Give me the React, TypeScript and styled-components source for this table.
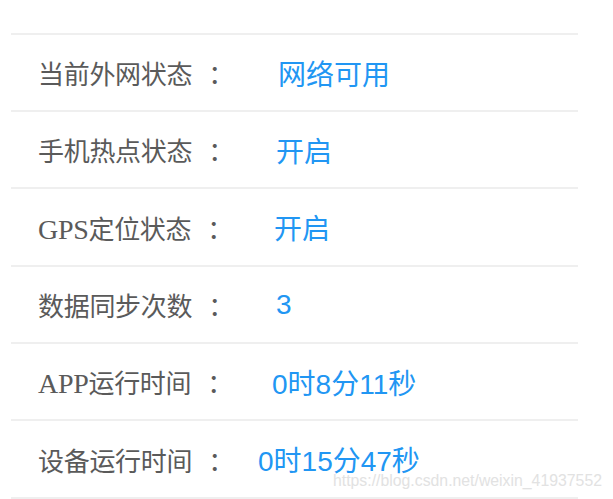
import styled, { createGlobalStyle } from 'styled-components';

const GlobalStyle = createGlobalStyle`
  html, body {
    margin: 0;
    padding: 0;
    background: #ffffff;
  }
`;

// value x positions in the screenshot differ a little per row
const rows = [
  { latin: '', label: '当前外网状态', value: '网络可用', shift: 20 },
  { latin: '', label: '手机热点状态', value: '开启', shift: 18 },
  { latin: 'GPS', label: '定位状态', value: '开启', shift: 16 },
  { latin: '', label: '数据同步次数', value: '3', shift: 18 },
  { latin: 'APP', label: '运行时间', value: '0时8分11秒', shift: 14 },
  { latin: '', label: '设备运行时间', value: '0时15分47秒', shift: 0 },
];

export default function App() {
  return (
    <>
      <GlobalStyle />
      <Page>
        <StatusList>
          {rows.map((row) => (
            <StatusRow key={row.label}>
              <Label>
                {row.latin && <Latin>{row.latin}</Latin>}
                {row.label}
                <Colon>：</Colon>
              </Label>
              <Value $shift={row.shift}>{row.value}</Value>
            </StatusRow>
          ))}
        </StatusList>
        <Watermark>https://blog.csdn.net/weixin_41937552</Watermark>
      </Page>
    </>
  );
}

const Page = styled.div`
  position: relative;
  width: 613px;
  height: 499px;
  overflow: hidden;
  padding-top: 33px;
  box-sizing: border-box;
`;

const StatusList = styled.div`
  margin-left: 11px;
  width: 567px;
  display: flex;
  flex-direction: column;
  border-bottom: 2px solid #efefef;
`;

const StatusRow = styled.div`
  display: grid;
  grid-template-columns: 220px 1fr;
  align-items: center;
  height: 75px;
  border-top: 2px solid #efefef;
  padding-left: 27px;
  &:nth-child(3n) {
    height: 76px;
  }
`;

const Label = styled.span`
  font-family: "Liberation Serif", "Noto Sans CJK SC", serif;
  font-size: 26px;
  letter-spacing: -0.3px;
  color: #5a5a5a;
  white-space: nowrap;
`;

const Latin = styled.span`
  font-size: 28px;
`;

const Colon = styled.span`
  margin-left: 16px;
`;

const Value = styled.span<{ $shift: number }>`
  margin-left: ${(p) => p.$shift}px;
  font-family: "Liberation Sans", "Noto Sans CJK SC", sans-serif;
  font-size: 28px;
  color: #2196f3;
  white-space: nowrap;
`;

const Watermark = styled.div`
  position: absolute;
  left: 333px;
  top: 471px;
  font-family: "Liberation Sans", sans-serif;
  font-size: 17px;
  color: #e2e2e2;
  white-space: nowrap;
  transform: scaleX(0.93);
  transform-origin: left center;
`;
